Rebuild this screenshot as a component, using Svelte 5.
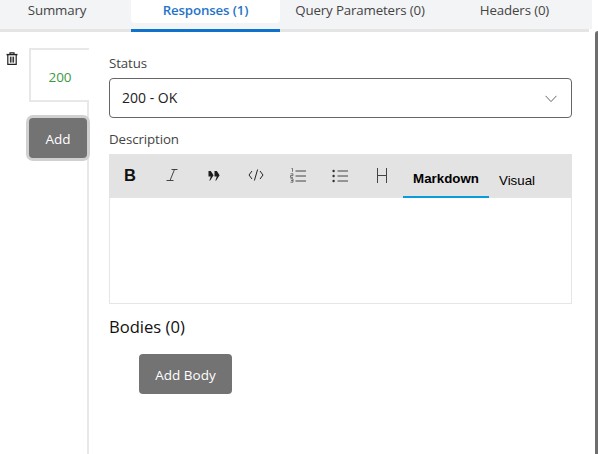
<script>
  const tabs = ['Summary', 'Responses (1)', 'Query Parameters (0)', 'Headers (0)'];
</script>

<div class="page">
  <nav class="tabs">
    {#each tabs as t, i}
      <div class="tab" class:active={i === 1}><span>{t}</span></div>
    {/each}
  </nav>
  <div class="scrollbar"></div>
  <div class="body">
    <div class="trash">
      <svg width="12" height="13" viewBox="0 0 12 13" fill="none" stroke="#222" stroke-width="1.2">
        <path d="M0.5 2.6H11.5" stroke-width="1.4"/>
        <path d="M4 2.4V0.8H8V2.4"/>
        <path d="M1.8 3V12.3H10.2V3"/>
        <path d="M4.4 4.6V10.6M6 4.6V10.6M7.6 4.6V10.6" stroke-width="1"/>
      </svg>
    </div>
    <aside class="side">
      <div class="code">200</div>
      <button class="add">Add</button>
    </aside>
    <main class="detail">
      <div class="label">Status</div>
      <div class="select">
        <span>200 - OK</span>
        <svg width="12" height="8" viewBox="0 0 12 8" fill="none" stroke="#666" stroke-width="1"><path d="M0.5 0.8L6 6.6L11.5 0.8"/></svg>
      </div>
      <div class="label desc">Description</div>
      <div class="editor">
        <div class="toolbar">
          <div class="tool bold">B</div>
          <div class="tool">
            <svg width="14" height="14" viewBox="0 0 14 14" fill="none" stroke="#333" stroke-width="0.9"><path d="M6.5 1.5H12.5M9.5 1.5L5 12.5M1.5 12.5H8.5"/></svg>
          </div>
          <div class="tool">
            <svg class="quote" width="12" height="10" viewBox="0 0 12 10" fill="#1c1c1c"><path d="M0.5 0H2.8L5.6 4.2L2 9.8L1.4 9.4L2.8 5.4H0.5ZM6.5 0H8.8L11.6 4.2L8 9.8L7.4 9.4L8.8 5.4H6.5Z"/></svg>
          </div>
          <div class="tool">
            <svg width="16" height="12" viewBox="0 0 16 12" fill="none" stroke="#222" stroke-width="1"><path d="M4 2L1 6L4 10M12 2L15 6L12 10M9.6 0.5L6.4 11.5"/></svg>
          </div>
          <div class="tool">
            <svg width="16" height="15" viewBox="0 0 16 15" fill="none" stroke="#444" stroke-width="1">
              <path d="M5.5 3H16M5.5 8H16M5.5 13H16"/>
              <path d="M1.5 0.5H2.5V3.8M0.5 5.8H3V7.6H0.5V9.4H3M0.5 10.8H3V14.2H0.5M1 12.5H3" stroke-width="0.7"/>
            </svg>
          </div>
          <div class="tool">
            <svg width="16" height="15" viewBox="0 0 16 15" fill="#333">
              <circle cx="1.6" cy="3" r="1.2"/><circle cx="1.6" cy="8" r="1.2"/><circle cx="1.6" cy="13" r="1.2"/>
              <path d="M5.5 3H16M5.5 8H16M5.5 13H16" stroke="#444" stroke-width="1" fill="none"/>
            </svg>
          </div>
          <div class="tool">
            <svg width="12" height="15" viewBox="0 0 12 15" fill="none" stroke="#444" stroke-width="1"><path d="M1.5 0V15M10.5 0V15M1.5 7.5H10.5"/></svg>
          </div>
          <div class="mode on">Markdown</div>
          <div class="mode visual">Visual</div>
        </div>
        <div class="area"></div>
      </div>
      <h2>Bodies (0)</h2>
      <button class="addbody">Add Body</button>
    </main>
  </div>
</div>

<style>
  :global(body) { margin: 0; background: #fff; overflow: hidden; }
  .page {
    position: relative;
    width: 598px;
    height: 454px;
    overflow: hidden;
    font-family: "Open Sans", "Noto Sans", sans-serif;
    color: #333;
  }
  .tabs {
    width: 589px;
    height: 29px;
    display: grid;
    grid-template-columns: 114px 17px 149px 160px 149px;
    background: #f3f4f6;
    border-bottom: 3px solid #e5e5e5;
    box-shadow: 3px -3px 0 #f3f4f6;
  }
  .tab {
    font-size: 13.3px;
    letter-spacing: -0.15px;
    line-height: 21px;
    text-align: center;
    color: #444;
  }
  .tab:nth-child(1) { grid-column: 1; }
  .tab:nth-child(2) { grid-column: 3; }
  .tab:nth-child(3) { grid-column: 4; }
  .tab:nth-child(4) { grid-column: 5; }
  .tab.active {
    position: relative;
    color: #1f74c9;
    font-weight: 600;
    background: #fff;
    height: 23px;
    border-radius: 0 0 4px 4px;
  }
  .tab.active::after {
    content: "";
    position: absolute;
    left: 0;
    right: 0;
    top: 29px;
    height: 3px;
    background: #0f73cc;
  }
  .scrollbar {
    position: absolute;
    right: 0;
    top: 31px;
    bottom: 0;
    width: 3px;
    background: #6e6e6e;
    border-radius: 3px 0 0 0;
  }
  .body { display: flex; height: 422px; }
  .trash { width: 29px; padding: 20px 0 0 6px; box-sizing: border-box; flex: none; }
  .trash svg { display: block; }
  .side {
    width: 60px;
    flex: none;
    box-sizing: border-box;
    margin-top: 16px;
    border-right: 2px solid #e8e8e8;
  }
  .code {
    height: 54px;
    width: 60px;
    box-sizing: border-box;
    border: 2px solid #e8e8e8;
    border-right: 0;
    background: #fff;
    color: #3a9a3f;
    font-size: 13.5px;
    line-height: 54px;
    text-align: center;
    position: relative;
  }
  button {
    border: 0;
    color: #fff;
    background: #737373;
    font-family: inherit;
    font-size: 13.5px;
    border-radius: 4px;
    padding: 2px 0 0;
  }
  .add {
    display: block;
    width: 58px;
    height: 40px;
    margin-top: 16px;
    box-shadow: 0 0 0 3px #d0d0d0;
  }
  .detail { width: 463px; margin-left: 20px; padding-top: 22px; }
  .label { font-size: 13.3px; line-height: 18px; color: #444; letter-spacing: -0.1px; }
  .select {
    margin-top: 6px;
    height: 40px;
    box-sizing: border-box;
    border: 1px solid #666;
    border-radius: 4px;
    display: flex;
    align-items: center;
    justify-content: space-between;
    padding: 0 14px 2px 12px;
    font-size: 14px;
    color: #222;
  }
  .select svg { margin-top: 4px; }
  .desc { margin-top: 12px; }
  .editor { margin-top: 6px; }
  .toolbar {
    height: 44px;
    background: #e3e3e3;
    display: flex;
    align-items: stretch;
  }
  .tool {
    width: 42px;
    box-sizing: border-box;
    padding-bottom: 2px;
    display: flex;
    align-items: center;
    justify-content: center;
  }
  .quote { margin-top: 1px; }
  .bold { font: 700 16.5px "Liberation Sans", sans-serif; color: #111; }
  .mode {
    font-family: "Liberation Sans", sans-serif;
    font-size: 13.3px;
    color: #000;
    display: flex;
    align-items: center;
  }
  .on {
    width: 86px;
    justify-content: center;
    font-weight: 700;
    border-bottom: 2px solid #0a9bd8;
    box-sizing: border-box;
    padding-top: 6px;
  }
  .visual { padding: 9px 0 0 10px; }
  .area { height: 105px; border: 1px solid #e6e6e6; border-top: 0; }
  h2 {
    font-size: 16.6px;
    font-weight: 400;
    color: #111;
    line-height: 22px;
    margin: 12px 0 0;
  }
  .addbody {
    display: block;
    width: 93px;
    height: 40px;
    margin: 16px 0 0 30px;
  }
</style>
